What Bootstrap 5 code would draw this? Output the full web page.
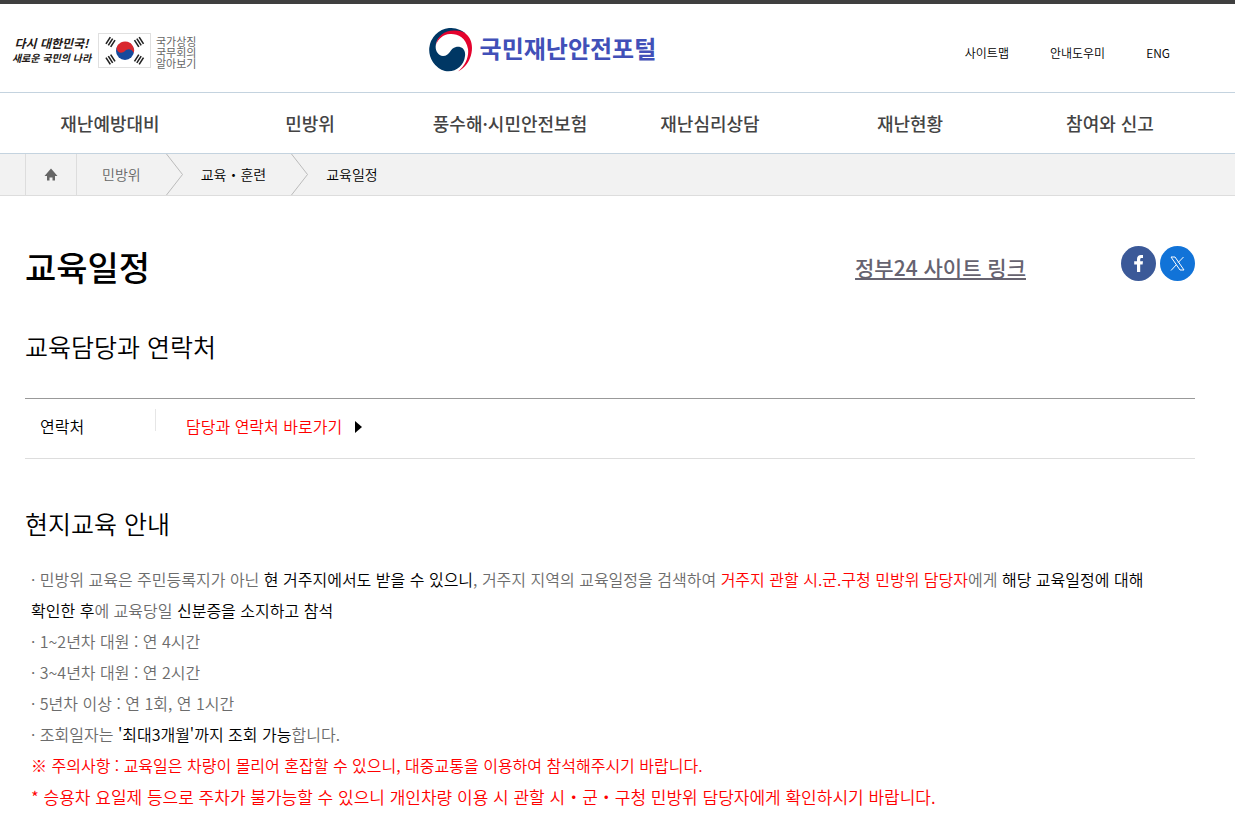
<!DOCTYPE html>
<html lang="ko">
<head>
<meta charset="utf-8">
<meta name="viewport" content="width=device-width, initial-scale=1">
<title>교육일정 | 국민재난안전포털</title>
<link rel="stylesheet" href="https://cdn.jsdelivr.net/npm/bootstrap@5.3.0/dist/css/bootstrap.min.css">
<style>
body{font-family:"Noto Sans CJK KR",sans-serif;font-weight:350;font-size:16px;line-height:31px;color:#000;border-top:4px solid #3f3f3f}
a{color:inherit;text-decoration:none}
.line-blue{border-bottom:1px solid #c4d3df}
.masthead{display:grid;grid-template-columns:36% 1fr auto;align-items:center;height:89px;padding:4px 65px 0 10px}
.slogan{font-size:10px;line-height:14px;font-weight:700;font-style:italic;color:#231815;text-align:center;width:83px;white-space:nowrap}
.slogan-top{font-size:12px}
.flagbox{width:53px;height:35px;border:1px solid #e0e0e0;margin:0 5px}
.symbols{font-size:11px;line-height:11px;font-weight:400;color:#666;padding-top:4px}
.brandname{font-size:24px;line-height:40px;font-weight:700;color:#4150b8;padding-bottom:4px}
.util{font-size:12px;line-height:20px;gap:41px;padding-top:6px}
.mainnav{padding:0 25px 0 10px;height:61px;font-size:18px;font-weight:500;color:#444}
.crumbs{background:#f2f2f2;border-bottom:1px solid #ddd;height:42px;padding-left:25px;font-size:14px}
.crumbs ol{margin:0;padding:0;list-style:none;height:41px}
.crumbs li{display:flex;align-items:center}
.home{width:52px;border:solid #ddd;border-width:0 1px;justify-content:center}
.crumb-first{color:#666;padding-left:25px}
.crumb-next{padding-left:18px}
.crumbs .chev{margin-left:25px}
.page{padding:47px 40px 24px 25px}
h1{font-size:34px;line-height:48px;font-weight:500;margin:0}
h2{font-size:25px;line-height:36px;font-weight:350;margin:0}
.gov{font-size:21px;line-height:30px;font-weight:500;color:#666370;text-decoration:underline;margin-right:95px}
.share{gap:4px;margin-bottom:8px}
.sect-a{margin:37px 0 34px}
.sect-b{margin:46px 0 23px}
.contact{border-top:1px solid #999;border-bottom:1px solid #ddd;height:61px;width:100%}
.contact th{width:130px;font-weight:350;padding:0 0 4px 15px}
.contact td{padding:0 0 4px}
.rule{height:22px;width:1px;background:#e6e6e6;margin:0 30px 14px 0}
.arrow{margin-left:13px}
.guide{color:#6c6c6c;padding:0 6px;word-break:keep-all}
.guide p{margin:0}
.guide b{font-weight:350;color:#000}
.red{color:#f00}
.big{font-size:17px}
</style>
</head>
<body>
<header>
<div class="masthead line-blue">
  <div class="d-flex align-items-center">
    <a href="#" class="slogan"><span class="slogan-top">다시 대한민국!</span><br>새로운 국민의 나라</a>
    <a href="#" class="d-flex align-items-center">
      <svg class="flagbox" viewBox="1 1 51 33" role="img" aria-label="태극기">
        <defs><path id="bars" d="M-2.8-4v8M0-4v8M2.8-4v8" stroke="#222" stroke-width="1.6"/></defs>
        <circle cx="27" cy="18" r="9" fill="#164a9c"/>
        <path d="M18.500 15A9 9 0 0 1 35.800 20C33 15 29 16 27 18C24 21 19 20 18.500 15Z" fill="#d9272e"/>
        <use href="#bars" transform="translate(12.500 9) rotate(33)"/><use href="#bars" transform="translate(41 9) rotate(-33)"/>
        <use href="#bars" transform="translate(12.500 26.500) rotate(-33)"/><use href="#bars" transform="translate(41 26.500) rotate(33)"/>
      </svg>
      <span class="symbols">국가상징<br>국무회의<br>알아보기</span></a>
  </div>
  <a href="#" class="d-flex align-items-center gap-2">
    <svg width="44" height="44" viewBox="0 0 44 44" aria-hidden="true">
      <path d="M38 6C33 1 27 0 21 0A22 22 0 0 0 17 43C27 45 36 38 37 28C38 21 33 18 28 19C22 20 22 28 15 28C8 27 6 19 9 13C14 4 27 1 38 6Z" fill="#003764"/>
      <path d="M8 17C9 8 17 2 27 2.500C32 2.500 36 4 38 6C43 10 45 17 43.500 25C42 33 37 40 30 43.500C38 37 41 28 40 21C38 9 29 5.500 22 6C15 6.500 10 11 8 17Z" fill="#e4032e"/>
    </svg>
    <span class="brandname">국민재난안전포털</span></a>
  <div class="util d-flex"><a href="#">사이트맵</a><a href="#">안내도우미</a><a href="#">ENG</a></div>
</div>
<nav class="mainnav line-blue row row-cols-6 g-0 align-items-center text-center"><a href="#">재난예방대비</a><a href="#">민방위</a><a href="#">풍수해·시민안전보험</a><a href="#">재난심리상담</a><a href="#">재난현황</a><a href="#">참여와 신고</a></nav>
</header>
<nav class="crumbs" aria-label="현재 위치">
  <ol class="d-flex">
    <li class="home"><a href="#" class="d-flex" aria-label="홈"><svg width="14" height="13" viewBox="0 0 14 13" fill="#666"><path d="M7 .5L13.500 8H11v4.500H8.500V9.500h-3v3H3V8H.5Z"/></svg></a></li>
    <li class="crumb-first"><a href="#">민방위</a><svg class="chev" width="17" height="41" viewBox="0 0 17 41" fill="none" stroke="#bbb"><path d="M.5 0L16.500 20.500L.5 41"/></svg></li>
    <li class="crumb-next"><a href="#">교육・훈련</a><svg class="chev" width="17" height="41" viewBox="0 0 17 41" fill="none" stroke="#bbb"><path d="M.5 0L16.500 20.500L.5 41"/></svg></li>
    <li class="crumb-next"><a href="#">교육일정</a></li>
  </ol>
</nav>
<main class="page">
<div class="d-flex align-items-center">
  <h1 class="me-auto">교육일정</h1>
  <a class="gov" href="#">정부24 사이트 링크</a>
  <div class="share d-flex">
    <a href="#" class="d-flex" aria-label="페이스북"><svg width="35" height="35" viewBox="0 0 35 35"><circle cx="17.500" cy="17.500" r="17.500" fill="#3b5998"/><path d="M16 26V18.500H13.200V15.300H16V13C16 10.300 17.600 9 20 9H22V12.100H20.700C19.500 12.100 19.200 12.700 19.200 13.600V15.300H22L21.600 18.500H19.200V26Z" fill="#fff"/></svg></a>
    <a href="#" class="d-flex" aria-label="X"><svg width="35" height="35" viewBox="0 0 35 35" fill="none" stroke="#fff"><circle cx="17.500" cy="17.500" r="17.500" fill="#1173d8" stroke="none"/><path d="M11 11H15L24 24H20ZM23.500 11L18.200 16.500M16.300 18.800L11 24.500"/></svg></a>
  </div>
</div>
<h2 class="sect-a">교육담당과 연락처</h2>
<table class="contact"><tbody><tr><th scope="row">연락처</th><td><div class="d-flex align-items-center"><span class="rule"></span><a href="#" class="red d-flex align-items-center">담당과 연락처 바로가기<svg class="arrow" width="7" height="12" viewBox="0 0 7 12"><path d="M0 0L7 6L0 12Z"/></svg></a></div></td></tr></tbody></table>
<h2 class="sect-b">현지교육 안내</h2>
<div class="guide">
<p>· 민방위 교육은 주민등록지가 아닌 <b>현 거주지에서도 받을 수 있으니</b>, 거주지 지역의 교육일정을 검색하여 <span class="red">거주지 관할 시.군.구청 민방위 담당자</span>에게 <b>해당 교육일정에 대해</b><br><b>확인한 후</b>에 교육당일 <b>신분증을 소지하고 참석</b></p>
<p>· 1~2년차 대원 : 연 4시간</p>
<p>· 3~4년차 대원 : 연 2시간</p>
<p>· 5년차 이상 : 연 1회, 연 1시간</p>
<p>· 조회일자는 <b>'최대3개월'까지 조회 가능</b>합니다.</p>
<p class="red">※ 주의사항 : 교육일은 차량이 몰리어 혼잡할 수 있으니, 대중교통을 이용하여 참석해주시기 바랍니다.</p>
<p class="red big">* 승용차 요일제 등으로 주차가 불가능할 수 있으니 개인차량 이용 시 관할 시・군・구청 민방위 담당자에게 확인하시기 바랍니다.</p>
</div>
</main>
<script src="https://cdn.jsdelivr.net/npm/bootstrap@5.3.0/dist/js/bootstrap.bundle.min.js"></script>
</body>
</html>
